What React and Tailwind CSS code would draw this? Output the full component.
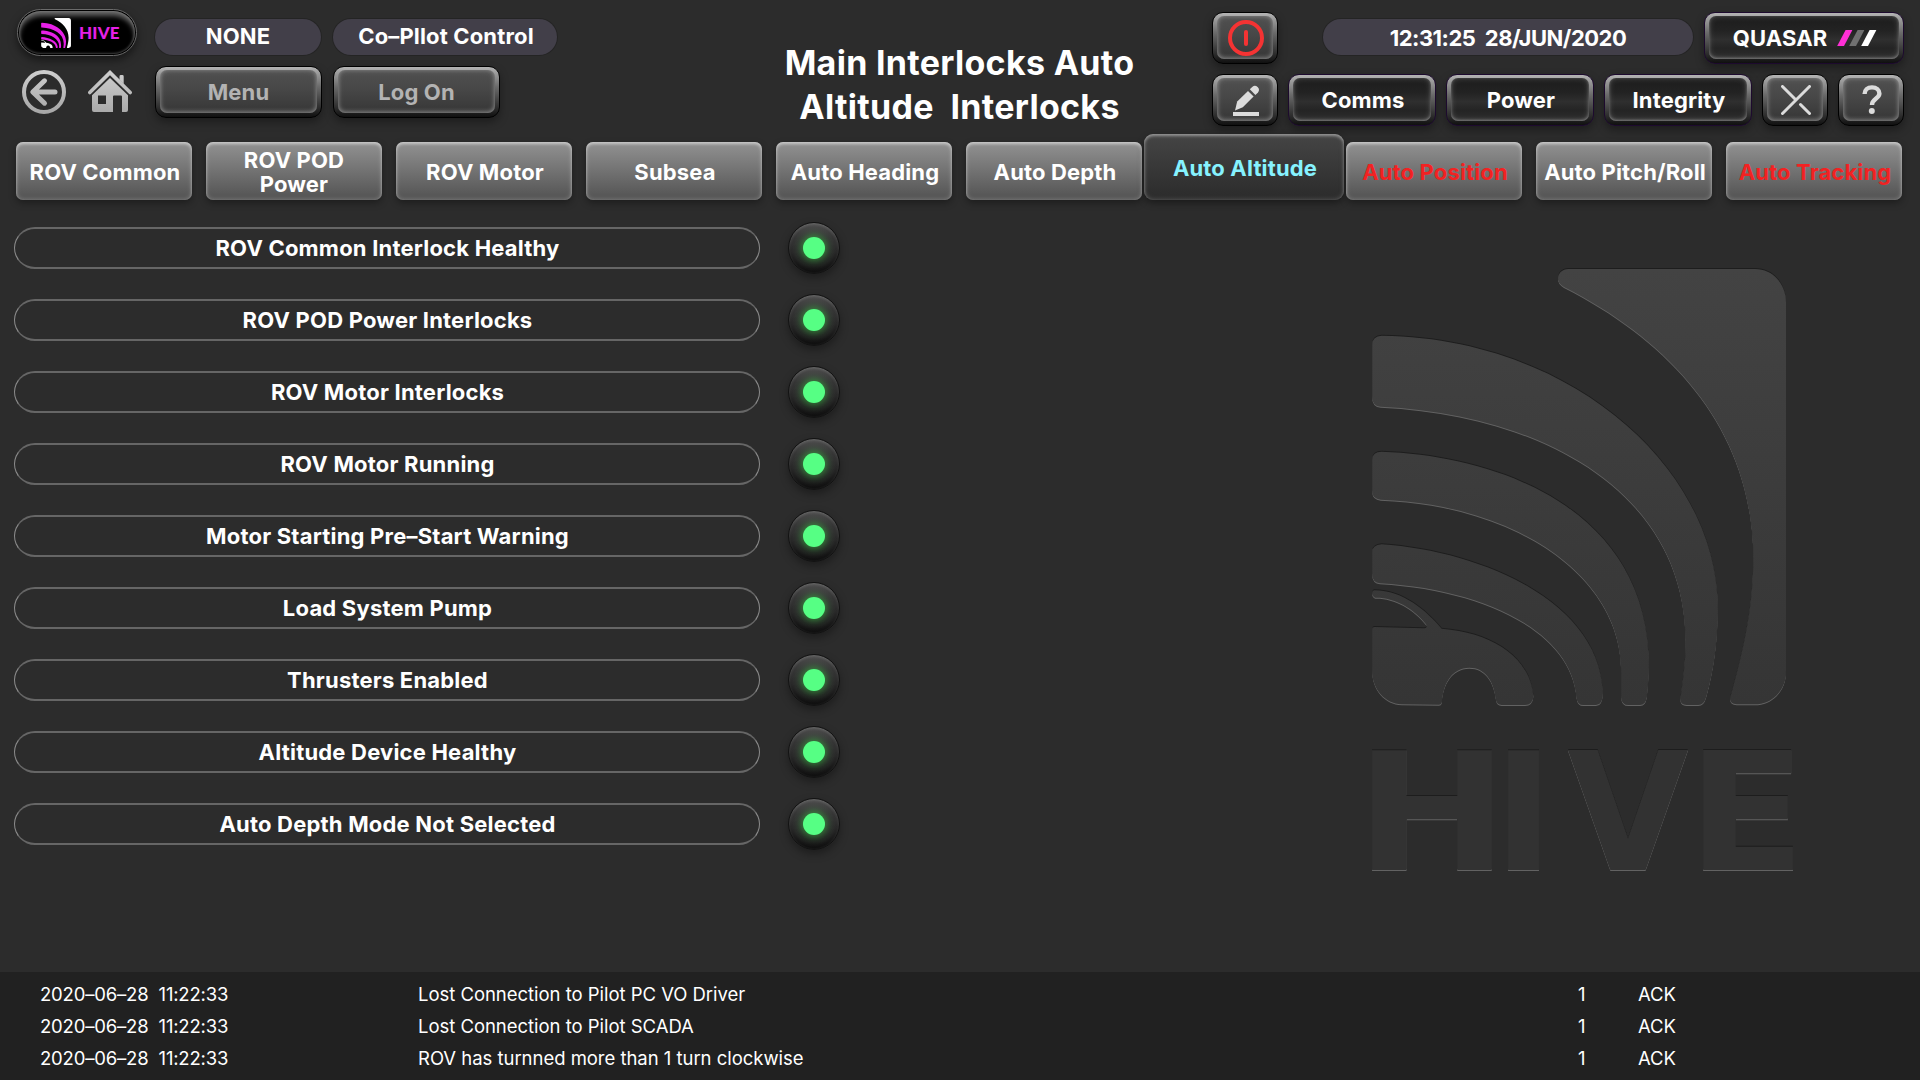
const EMBLEM_CORNER =
  'M685 84H1245C1300 84 1338 130 1338 185V1290C1338 1350 1295 1390 1245 1390H1190Q1165 1388 1172 1365C1215 1210 1240 1090 1240 950C1240 580 1010 310 672 138C640 120 655 84 685 84Z';
const EMBLEM_ARCS = [
  'M125 284C690 290 1133 680 1133 1100C1133 1200 1120 1290 1098 1368Q1092 1392 1075 1392H1040Q1018 1392 1022 1368C1030 1310 1037 1260 1037 1200C1037 755 610 520 122 497Q97 495 97 470V310Q97 286 125 284Z',
  'M125 632C500 645 926 820 926 1270C926 1310 923 1340 920 1368Q917 1392 900 1392H865Q845 1392 844 1370V1290C844 1000 520 790 122 776Q97 774 97 750V655Q97 632 125 632Z',
  'M125 910C420 930 780 1080 788 1355Q788 1392 768 1392H730Q712 1392 710 1370C695 1170 430 1045 120 1027Q97 1025 97 1000V932Q97 912 125 910Z',
];
const EMBLEM_BASE =
  'M103 1048C190 1048 260 1110 305 1163C460 1175 570 1250 580 1365Q578 1392 555 1392H485Q470 1392 468 1375C462 1320 435 1280 388 1280C335 1280 308 1330 305 1385Q303 1391 297 1391L185 1390C135 1388 97 1345 97 1290V1163Q97 1158 103 1158L250 1162Q262 1162 260 1152C220 1100 160 1068 105 1070Q97 1068 97 1060Q97 1048 103 1048Z';

const interlocks = [
  'ROV Common Interlock Healthy',
  'ROV POD Power Interlocks',
  'ROV Motor Interlocks',
  'ROV Motor Running',
  'Motor Starting Pre–Start Warning',
  'Load System Pump',
  'Thrusters Enabled',
  'Altitude Device Healthy',
  'Auto Depth Mode Not Selected',
];

const tabs = [
  { label: 'ROV Common' },
  { label: 'ROV POD Power' },
  { label: 'ROV Motor' },
  { label: 'Subsea' },
  { label: 'Auto Heading' },
  { label: 'Auto Depth' },
  { label: 'Auto Altitude', active: true },
  { label: 'Auto Position', fault: true },
  { label: 'Auto Pitch/Roll' },
  { label: 'Auto Tracking', fault: true },
];

const log = [
  'Lost Connection to Pilot PC VO Driver',
  'Lost Connection to Pilot SCADA',
  'ROV has turnned more than 1 turn clockwise',
];

function BevelButton({ children, dark = false, className = '' }) {
  return (
    <button
      className={`h-[52px] shrink-0 rounded-[11px] border px-1 pt-[3px] pb-1 shadow-[0_4px_8px_rgba(0,0,0,0.35)] bg-[linear-gradient(180deg,#b4b4b4_0%,#a0a0a0_10%,#6a6a6a_40%,#2c2c2c_82%,#101010_100%)] ${
        dark ? 'border-[#1d0a2e]' : 'border-black'
      } ${className}`}
    >
      <span
        className={`flex h-full w-full items-center justify-center rounded-[7px] ${
          dark
            ? 'bg-[linear-gradient(180deg,#1c1c1c_0%,#232323_35%,#2f2f2f_55%,#242424_75%,#2e2e2e_100%)] shadow-[inset_0_-1px_3px_rgba(255,255,255,0.3),inset_0_0_6px_rgba(255,255,255,0.22)]'
            : 'bg-[linear-gradient(180deg,#505050_0%,#474747_45%,#363636_100%)] shadow-[inset_0_-1px_4px_rgba(255,255,255,0.3),inset_0_0_6px_rgba(255,255,255,0.22)]'
        }`}
      >
        {children}
      </span>
    </button>
  );
}

function Pill({ children, className = '' }) {
  return (
    <div
      className={`flex h-9 items-center justify-center rounded-full bg-[#423f49] whitespace-pre shadow-[0_0_0_1px_rgba(0,0,0,0.18)] ${className}`}
    >
      {children}
    </div>
  );
}

function LogoPill() {
  return (
    <div className="flex h-[47px] w-[120px] items-center rounded-full border border-[#6b6b6b] bg-black p-px shadow-[0_4px_8px_rgba(0,0,0,0.5)]">
      <div className="flex h-full w-full items-center rounded-full bg-black pl-[22px] shadow-[inset_0_5px_5px_rgba(150,150,150,0.65),inset_0_0_3px_rgba(170,170,170,0.7)]">
        <svg className="mt-px h-[30px] w-[30px]" viewBox="90 80 1250 1315" preserveAspectRatio="none">
          <path d={EMBLEM_CORNER} fill="#fff" />
          {EMBLEM_ARCS.map((d) => (
            <path key={d} d={d} fill="#e620e6" />
          ))}
          <path d={EMBLEM_BASE} fill="#fff" />
        </svg>
        <span className="ml-[8px] font-['Lato',sans-serif] text-[17px] leading-none font-black tracking-[0.2px] text-[#e620e6]">
          HIVE
        </span>
      </div>
    </div>
  );
}

function BackIcon() {
  return (
    <svg className="h-11 w-11" viewBox="0 0 44 44" fill="none">
      <defs>
        <linearGradient id="backTone" gradientUnits="userSpaceOnUse" x1="0" y1="0" x2="0" y2="44">
          <stop stopColor="#cfcfcf" />
          <stop offset="1" stopColor="#a6a6a6" />
        </linearGradient>
      </defs>
      <g stroke="url(#backTone)" strokeLinecap="round" strokeLinejoin="round">
        <circle cx="22" cy="22" r="20" strokeWidth="4" />
        <path d="M33 22.01H11.5M22.5 10.8L10.8 22L22.5 33.2" strokeWidth="5" />
      </g>
    </svg>
  );
}

function HomeIcon() {
  return (
    <svg className="h-11 w-11" viewBox="0 0 44 44">
      <defs>
        <linearGradient id="homeTone" gradientUnits="userSpaceOnUse" x1="0" y1="0" x2="0" y2="44">
          <stop stopColor="#cfcfcf" />
          <stop offset="1" stopColor="#a9a9a9" />
        </linearGradient>
      </defs>
      <path
        d="M1.8 22.5L22 2.6L42.2 22.5"
        fill="none"
        stroke="url(#homeTone)"
        strokeWidth="3.6"
        strokeLinecap="round"
        strokeLinejoin="miter"
      />
      <path d="M31.5 6.5a1.4 1.4 0 0 1 1.4-1.4h1.4a1.4 1.4 0 0 1 1.4 1.4V14L31.5 10Z" fill="url(#homeTone)" />
      <path
        fillRule="evenodd"
        d="M22 8L40 25.2V40q0 2-2 2H34V26.5q0-1-1-1H26q-1 0-1 1V42H6q-2 0-2-2V25.2ZM10 25.5V34H18V25.5Z"
        fill="url(#homeTone)"
      />
    </svg>
  );
}

function EditIcon() {
  return (
    <svg className="h-[34px] w-[30px]" viewBox="0 0 30 34" fill="#dcdcdc">
      <path d="M2 29H28V33H2Z" />
      <path d="M4 27.5L6.2 18.6L17 8L22.6 13.6L11.8 24.2Z" />
      <path d="M18.8 6.3L21.2 3.9Q24 1.6 26.6 4Q29.2 6.6 27 9.4L24.4 12Z" />
    </svg>
  );
}

function Led() {
  return (
    <div className="flex h-[52px] w-[52px] items-center justify-center rounded-full border border-[#121212] bg-[linear-gradient(180deg,#4e4e4e_0%,#373737_30%,#2a2a2a_65%,#181818_100%)] shadow-[0_4px_8px_rgba(0,0,0,0.35),inset_0_1px_3px_rgba(255,255,255,0.2),inset_0_-3px_4px_rgba(0,0,0,0.5)]">
      <div className="h-[22px] w-[22px] rounded-full bg-[#56ff84] shadow-[0_0_7px_2px_rgba(60,190,70,0.6)]" />
    </div>
  );
}

function Watermark() {
  return (
    <svg
      className="h-[660px] w-[450px] [filter:drop-shadow(0_-1px_0.5px_#1d1d1d)_drop-shadow(0_1px_0.5px_#626262)]"
      viewBox="90 60 1350 1980"
    >
      <defs>
        <linearGradient id="markTone" gradientUnits="userSpaceOnUse" x1="0" y1="84" x2="0" y2="1892">
          <stop stopColor="#434343" />
          <stop offset="0.72" stopColor="#353535" />
          <stop offset="1" stopColor="#303030" />
        </linearGradient>
      </defs>
      <g fill="url(#markTone)">
        <path d={EMBLEM_CORNER} />
        {EMBLEM_ARCS.map((d) => (
          <path key={d} d={d} />
        ))}
        <path d={EMBLEM_BASE} />
      </g>
      <g fill="#323232" fontFamily="DejaVu Sans" fontWeight="700" fontSize="493">
        <text transform="translate(46 1887) scale(1.114 1)">H</text>
        <text x="459" y="1887">I</text>
        <text transform="translate(682 1887) scale(0.955 1)">V</text>
        <text transform="translate(1042 1887) scale(1.055 1)">E</text>
      </g>
    </svg>
  );
}

export default function App() {
  return (
    <div className="flex h-[1080px] w-[1920px] flex-col overflow-hidden bg-[#2c2c2c] font-['Inter',sans-serif] text-[22px] leading-6 font-bold tracking-[0.15px] text-white">
      <header className="grid h-[134px] shrink-0 grid-cols-[760px_399px_1fr]">
        <div className="flex pl-[17px]">
          <div className="w-[138px] pt-[9px]">
            <LogoPill />
            <div className="mt-[14px] flex gap-[22px] pl-[5px]">
              <BackIcon />
              <HomeIcon />
            </div>
          </div>
          <div className="pt-[19px]">
            <div className="flex gap-3">
              <Pill className="w-[166px] pb-0.5">NONE</Pill>
              <Pill className="w-[224px] pb-0.5 pl-0.5">Co–Pllot Control</Pill>
            </div>
            <div className="mt-[11px] flex gap-[11px] text-[#b3b3b3]">
              <BevelButton className="w-[167px]">Menu</BevelButton>
              <BevelButton className="w-[167px]">Log On</BevelButton>
            </div>
          </div>
        </div>

        <h1 className="pt-[41px] text-center text-[34px] leading-[44px] tracking-[0.3px] whitespace-pre">
          {'Main Interlocks Auto\nAltitude  Interlocks'}
        </h1>

        <div className="flex flex-col gap-[10px] pt-3 pr-4 [&_button>span]:pl-0.5">
          <div className="flex items-start justify-end">
            <BevelButton className="w-[66px]">
              <svg className="h-9 w-9" viewBox="0 0 36 36" fill="none" stroke="#f53333">
                <circle cx="18" cy="18" r="16" strokeWidth="4" />
                <path d="M18 12V24" strokeWidth="4" strokeLinecap="round" />
              </svg>
            </BevelButton>
            <Pill className="mt-[7px] mr-[11px] ml-[45px] w-[370px] pt-px tracking-[-0.5px]">
              12:31:25{'  '}28/JUN/2020
            </Pill>
            <BevelButton dark className="w-[200px]">
              QUASAR
              <svg className="ml-[10px] h-4 w-10" viewBox="0 0 40 16">
                <path d="M8.6 0H15.4L7 16H0.2Z" fill="#ff2fd6" />
                <path d="M20.6 0H27.4L19 16H12.2Z" fill="#707070" />
                <path d="M32.6 0H39.4L31 16H24.2Z" fill="#fff" />
              </svg>
            </BevelButton>
          </div>
          <div className="flex justify-end gap-[10px]">
            <BevelButton className="w-[66px]">
              <EditIcon />
            </BevelButton>
            <BevelButton dark className="w-[148px]">Comms</BevelButton>
            <BevelButton dark className="w-[148px]">Power</BevelButton>
            <BevelButton dark className="w-[148px]">Integrity</BevelButton>
            <BevelButton className="w-[66px]">
              <svg className="h-[30px] w-[30px]" viewBox="0 0 30 30" stroke="#dcdcdc" strokeWidth="3" strokeLinecap="round">
                <path d="M1.5 1.5L14.5 14.5M28.5 1.5L1.5 28.5M19.5 19.5L28.5 28.5" />
              </svg>
            </BevelButton>
            <BevelButton className="w-[66px]">
              <svg className="h-[30px] w-5" viewBox="0 0 20 30" fill="none">
                <path
                  d="M2.6 9C2.6 4.8 5.6 2.4 10 2.4C14.4 2.4 17.4 5 17.4 8.6C17.4 13.6 10 13.6 10 20"
                  stroke="#dcdcdc"
                  strokeWidth="4.4"
                />
                <circle cx="9.8" cy="26" r="3" fill="#dcdcdc" />
              </svg>
            </BevelButton>
          </div>
        </div>
      </header>

      <nav className="flex h-[66px] shrink-0 items-end gap-[14px] pl-4">
        {tabs.map((tab) => (
          <button
            key={tab.label}
            className={
              tab.active
                ? '-mx-3 flex h-[66px] w-[200px] shrink-0 items-center justify-center rounded-[9px] bg-[linear-gradient(180deg,#454545,#2b2b2b)] pt-0.5 pl-0.5 text-[#86f2ff] shadow-[0_3px_7px_rgba(0,0,0,0.4),inset_0_2px_3px_rgba(255,255,255,0.35),inset_0_0_5px_rgba(255,255,255,0.25)]'
                : `flex h-[58px] w-[176px] shrink-0 items-center justify-center rounded-[7px] bg-[linear-gradient(180deg,#929292,#525252)] pt-0.5 text-center shadow-[0_3px_7px_rgba(0,0,0,0.35),inset_0_2px_3px_rgba(255,255,255,0.4),inset_0_0_5px_rgba(255,255,255,0.3)] ${
                    tab.label === 'ROV POD Power' ? 'px-8' : 'pl-0.5 whitespace-nowrap'
                  } ${tab.fault ? 'text-[#f22222]' : ''}`
            }
          >
            {tab.label}
          </button>
        ))}
      </nav>

      <main className="flex flex-1 justify-between pr-[100px] pl-[14px]">
        <ul className="flex flex-col gap-5 pt-[22px]">
          {interlocks.map((name) => (
            <li key={name} className="flex h-[52px] items-center gap-7">
              <div className="flex h-[42px] w-[746px] items-center justify-center rounded-full border-x border-y-2 border-x-[#8c8c8c] border-y-[#666666] pl-px tracking-[0.2px]">
                {name}
              </div>
              <Led />
            </li>
          ))}
        </ul>
        <div className="pt-[61px]">
          <Watermark />
        </div>
      </main>

      <footer className="h-[108px] shrink-0 bg-[#212121] pt-[6px] text-[18.5px] font-normal tracking-[-0.03px]">
        {log.map((message) => (
          <div key={message} className="grid h-8 grid-cols-[378px_1150px_70px_1fr] items-center pl-10">
            <span className="tracking-[-0.18px] whitespace-pre">2020–06–28{'  '}11:22:33</span>
            <span>{message}</span>
            <span className="pl-[10px]">1</span>
            <span>ACK</span>
          </div>
        ))}
      </footer>
    </div>
  );
}
